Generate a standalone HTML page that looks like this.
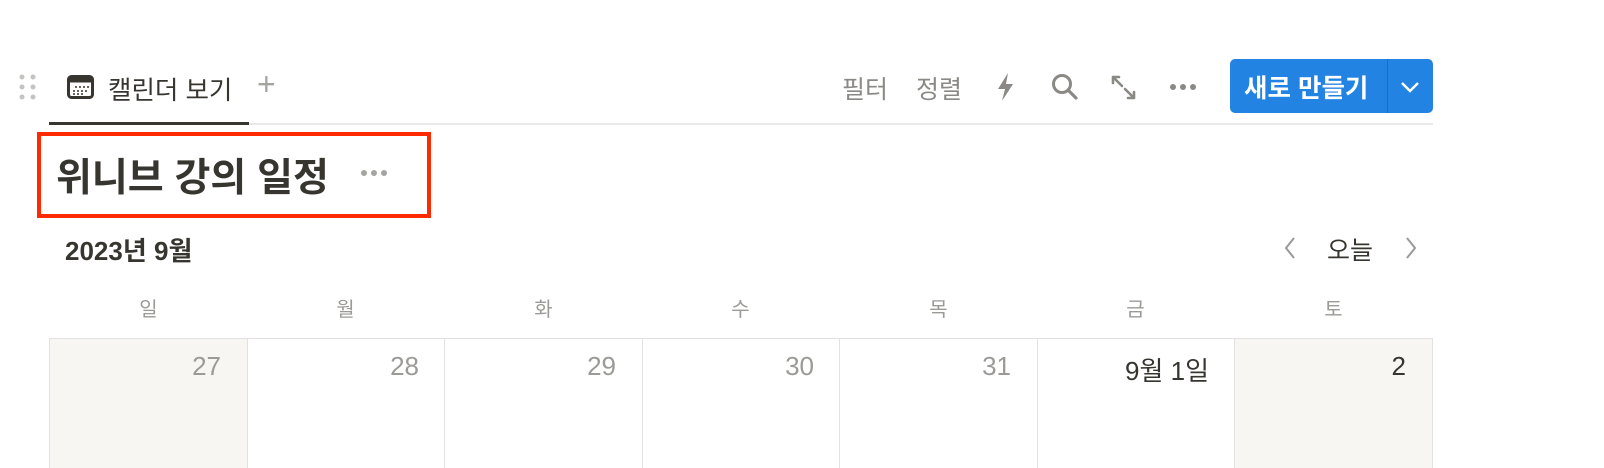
<!DOCTYPE html><html><head><meta charset="utf-8"><style>
*{margin:0;padding:0;box-sizing:border-box}
body{width:1604px;height:458px;background:#fff;position:relative;overflow:hidden;font-family:"Liberation Sans","Noto Sans CJK KR",sans-serif;color:#37352f}
.a{position:absolute;white-space:nowrap}
.g{color:#8a8985}
.cell{position:absolute;top:338px;height:130px;border-left:1px solid #e3e2e0;border-top:1px solid #e3e2e0;font-size:26px;color:#9b9a97;text-align:right;padding:12px 26px 0 0}
.wd{position:absolute;top:293px;width:197px;text-align:center;font-size:20px;color:#9b9a97}
</style></head><body>
<svg class="a" style="left:18px;top:73px" width="20" height="28"><g fill="#c4c3c0"><circle cx="4" cy="4" r="2.5"/><circle cx="15" cy="4" r="2.5"/><circle cx="4" cy="14" r="2.5"/><circle cx="15" cy="14" r="2.5"/><circle cx="4" cy="24" r="2.5"/><circle cx="15" cy="24" r="2.5"/></g></svg>
<svg class="a" style="left:67px;top:75px" width="27" height="24"><rect x="1.5" y="1.5" width="24" height="21" rx="3" fill="none" stroke="#37352f" stroke-width="3"/><rect x="1.5" y="1.5" width="24" height="6" fill="#37352f"/><g fill="#37352f"><circle cx="9" cy="12" r="1"/><circle cx="13" cy="12" r="1"/><circle cx="17" cy="12" r="1"/><circle cx="21" cy="12" r="1"/><circle cx="7" cy="16" r="1"/><circle cx="11" cy="16" r="1"/><circle cx="15" cy="16" r="1"/><circle cx="19" cy="16" r="1"/><circle cx="7" cy="19" r="1"/><circle cx="11" cy="19" r="1"/><circle cx="15" cy="19" r="1"/></g></svg>
<div class="a" style="left:108px;top:70px;font-size:25.5px">캘린더 보기</div>
<div class="a" style="left:257px;top:66px;font-size:32px;color:#a5a4a1;font-weight:300">+</div>
<div class="a" style="left:49px;top:122px;width:200px;height:3px;background:#37352f"></div>
<div class="a" style="left:249px;top:123px;width:1184px;height:2px;background:#e9e9e7"></div>
<div class="a g" style="left:842px;top:70px;font-size:25px">필터</div>
<div class="a g" style="left:916px;top:70px;font-size:25px">정렬</div>
<svg class="a" style="left:995px;top:72px" width="22" height="30"><path d="M13 1 L3 17 H10 L7 29 L18 12 H11 Z" fill="#8a8985"/></svg>
<svg class="a" style="left:1050px;top:72px" width="30" height="30"><circle cx="12" cy="12" r="8.5" fill="none" stroke="#8a8985" stroke-width="3"/><path d="M18 18 L26 26" stroke="#8a8985" stroke-width="3.2" stroke-linecap="round"/></svg>
<svg class="a" style="left:1110px;top:74px" width="28" height="28"><g stroke="#8a8985" stroke-width="2.6" fill="none" stroke-linecap="round"><path d="M3 3 L12 12 M3 3 H9 M3 3 V9"/><path d="M24 24 L15 15 M24 24 H18 M24 24 V18"/></g></svg>
<svg class="a" style="left:1168px;top:82px" width="30" height="10"><g fill="#8a8985"><circle cx="5" cy="5" r="3"/><circle cx="15" cy="5" r="3"/><circle cx="25" cy="5" r="3"/></g></svg>
<div class="a" style="left:1230px;top:59px;width:203px;height:54px;background:#2383e2;border-radius:5px"></div>
<div class="a" style="left:1387px;top:59px;width:1px;height:54px;background:#1a6fc4"></div>
<div class="a" style="left:1244px;top:68px;font-size:25.5px;color:#fff;font-weight:bold">새로 만들기</div>
<svg class="a" style="left:1400px;top:80px" width="20" height="14"><path d="M2 3 L10 11 L18 3" stroke="#fff" stroke-width="2.4" fill="none"/></svg>
<div class="a" style="left:37px;top:132px;width:394px;height:86px;border:4px solid #ff2a00"></div>
<div class="a" style="left:56px;top:147px;font-size:39px;font-weight:bold;color:#37352f">위니브 강의 일정</div>
<svg class="a" style="left:360px;top:168px" width="30" height="10"><g fill="#a5a4a1"><circle cx="4" cy="5" r="3"/><circle cx="14" cy="5" r="3"/><circle cx="24" cy="5" r="3"/></g></svg>
<div class="a" style="left:65px;top:231px;font-size:26px;font-weight:bold">2023년 9월</div>
<svg class="a" style="left:1282px;top:235px" width="16" height="26"><path d="M12 3 L4 13 L12 23" stroke="#9b9a97" stroke-width="2" fill="none"/></svg>
<div class="a" style="left:1327px;top:231px;font-size:25px">오늘</div>
<svg class="a" style="left:1403px;top:235px" width="16" height="26"><path d="M4 3 L12 13 L4 23" stroke="#9b9a97" stroke-width="2" fill="none"/></svg>
<div class="wd" style="left:50px">일</div><div class="wd" style="left:247px">월</div><div class="wd" style="left:445px">화</div><div class="wd" style="left:642px">수</div><div class="wd" style="left:840px">목</div><div class="wd" style="left:1037px">금</div><div class="wd" style="left:1235px">토</div>
<div class="cell" style="left:49px;width:198px;background:#f7f6f3">27</div>
<div class="cell" style="left:247px;width:198px">28</div>
<div class="cell" style="left:444px;width:198px">29</div>
<div class="cell" style="left:642px;width:198px">30</div>
<div class="cell" style="left:839px;width:198px">31</div>
<div class="cell" style="left:1037px;width:198px;color:#37352f">9월 1일</div>
<div class="cell" style="left:1234px;width:199px;background:#f7f6f3;color:#37352f;border-right:1px solid #e3e2e0">2</div>
</body></html>
